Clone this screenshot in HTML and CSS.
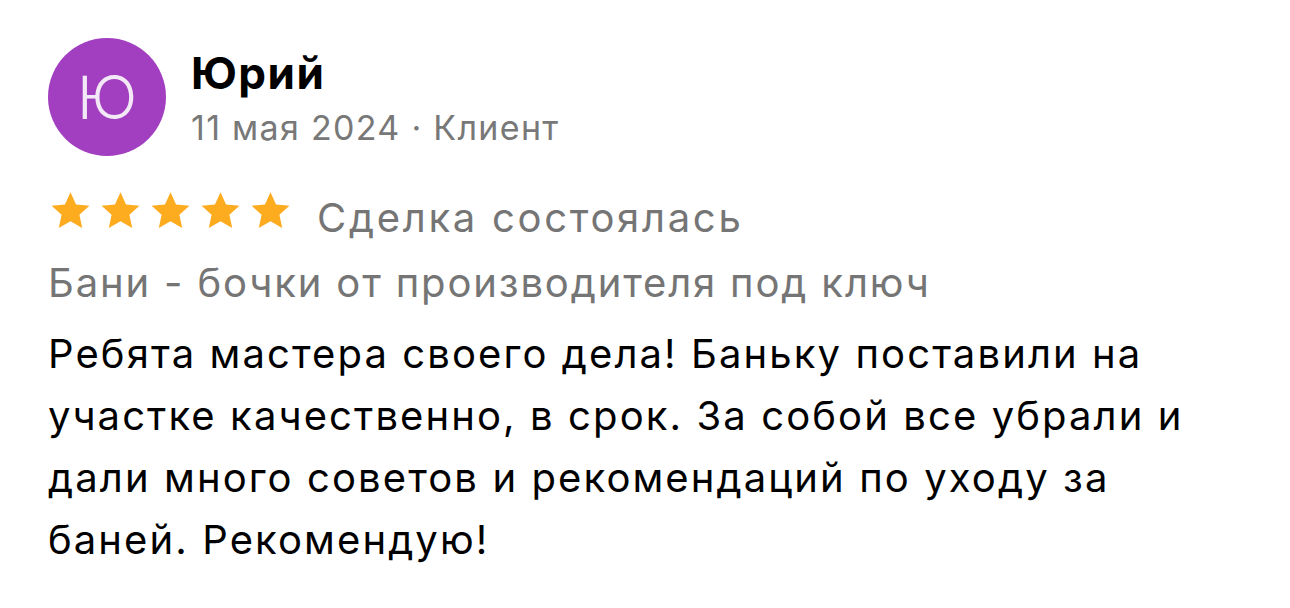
FILE: index.html
```html
<!DOCTYPE html>
<html lang="ru">
<head>
<meta charset="utf-8">
<link rel="stylesheet" href="styles.css">
</head>
<body>
<div class="review">
  <div class="header">
    <div class="avatar">Ю</div>
    <div class="meta">
      <div class="name">Юрий</div>
      <div class="date">11 мая 2024 · Клиент</div>
    </div>
  </div>
  <div class="rating">
    <div class="stars">
      <svg class="star" viewBox="0 0 24 24"><path d="M12 2.2l2.95 6.55 7.15.75-5.35 4.8 1.5 7.050L12 17.75 5.75 21.35l1.5-7.05L1.9 9.5l7.15-.75z"/></svg>
      <svg class="star" viewBox="0 0 24 24"><path d="M12 2.2l2.95 6.55 7.15.75-5.35 4.8 1.5 7.05L12 17.75 5.75 21.35l1.5-7.05L1.9 9.5l7.15-.75z"/></svg>
      <svg class="star" viewBox="0 0 24 24"><path d="M12 2.2l2.95 6.55 7.15.75-5.35 4.8 1.5 7.05L12 17.75 5.75 21.35l1.5-7.05L1.9 9.5l7.15-.75z"/></svg>
      <svg class="star" viewBox="0 0 24 24"><path d="M12 2.2l2.95 6.55 7.15.75-5.35 4.8 1.5 7.05L12 17.75 5.75 21.35l1.5-7.05L1.9 9.5l7.15-.75z"/></svg>
      <svg class="star" viewBox="0 0 24 24"><path d="M12 2.2l2.95 6.55 7.15.75-5.35 4.8 1.5 7.05L12 17.75 5.75 21.35l1.5-7.05L1.9 9.5l7.15-.75z"/></svg>
    </div>
    <span class="deal">Сделка состоялась</span>
  </div>
  <div class="item">Бани - бочки от производителя под ключ</div>
  <p class="text">Ребята мастера своего дела! Баньку поставили на участке качественно, в срок. За собой все убрали и дали много советов и рекомендаций по уходу за баней. Рекомендую!</p>
</div>
</body>
</html>
```
FILE: styles.css
```css
html, body {
  margin: 0;
  padding: 0;
  background: #ffffff;
}
body {
  font-family: Inter, "Noto Sans", sans-serif;
  color: #000;
}
.review {
  padding: 38px 0 0 48px;
  width: 1170px;
}
.header {
  display: flex;
  align-items: flex-start;
  gap: 25px;
}
.avatar {
  width: 118px;
  height: 118px;
  border-radius: 50%;
  background: #a23fc0;
  color: #f3e8f6;
  font-size: 60px;
  font-weight: 300;
  display: flex;
  align-items: center;
  justify-content: center;
  flex-shrink: 0;
}
.meta {
  display: flex;
  flex-direction: column;
  padding-top: 10px;
}
.name {
  font-size: 44px;
  font-weight: 700;
  line-height: 50px;
  letter-spacing: 1.5px;
}
.date {
  margin-top: 8px;
  font-size: 34px;
  color: #787878;
  line-height: 44px;
  letter-spacing: 1.3px;
}
.rating {
  display: flex;
  align-items: center;
  margin-top: 37px;
  height: 50px;
}
.stars {
  display: flex;
  gap: 5px;
  margin-bottom: 16px;
  margin-right: 24px;
}
.star {
  width: 45px;
  height: 45px;
  fill: #fdab1f;
}
.deal {
  font-size: 40px;
  line-height: 50px;
  color: #757575;
  letter-spacing: 2.7px;
}
.item {
  margin-top: 15px;
  font-size: 40px;
  line-height: 50px;
  color: #757575;
  letter-spacing: 1.85px;
}
.text {
  margin: 15px 0 0 0;
  font-size: 40px;
  line-height: 62px;
  letter-spacing: 2.1px;
}
```
